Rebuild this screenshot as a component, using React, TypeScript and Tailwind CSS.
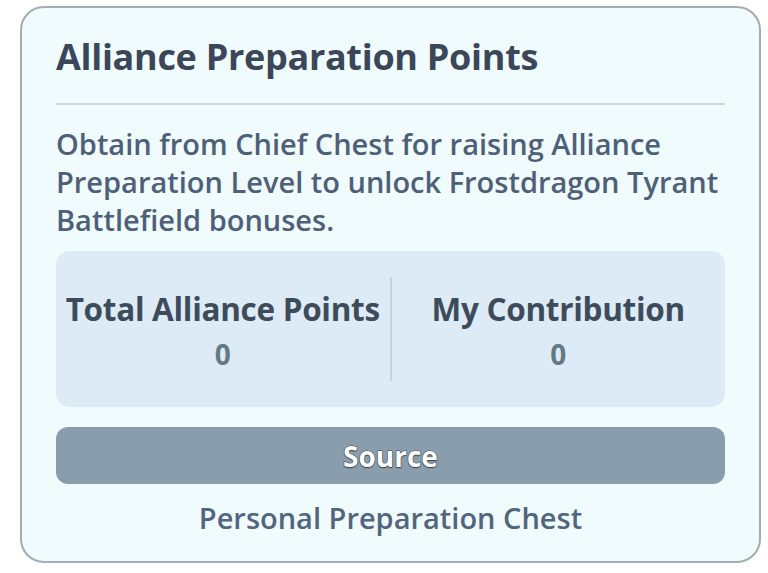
const stats = [
  { label: "Total Alliance Points", value: 0 },
  { label: "My Contribution", value: 0 },
];

export default function App() {
  return (
    <div className="w-[768px] h-[573px] bg-white flex items-start pl-[20px] pt-[6px] font-['Open_Sans',sans-serif]">
      <div className="w-[741px] h-[557px] rounded-[24px] border-2 border-[#a3acb2] bg-[#f0fbfd] px-[34px] pt-[27px] flex flex-col">
        <h1 className="text-[36px] leading-[44px] font-bold text-[#3b4759] tracking-[-0.3px]">
          Alliance Preparation Points
        </h1>
        <div className="mt-[24px] h-[2px] bg-[#ccd6db]" />

        <p className="mt-[20px] text-[29px] leading-[38px] font-semibold text-[#4e6079]">
          Obtain from Chief Chest for raising Alliance Preparation Level to unlock Frostdragon Tyrant Battlefield bonuses.
        </p>

        <div className="mt-[12px] h-[156px] rounded-[14px] bg-[#dcebf6] flex items-center">
          {stats.map((s, i) => (
            <div
              key={s.label}
              className={
                i === 0
                  ? "flex-1 h-[104px] pt-[2px] flex flex-col items-center justify-center border-r-2 border-[#c4d3dd]"
                  : "flex-1 h-[104px] pt-[2px] flex flex-col items-center justify-center"
              }
            >
              <div className="text-[31.5px] leading-[40px] font-bold text-[#3e4b5b] tracking-[-0.3px]">{s.label}</div>
              <div className="mt-[7px] text-[28px] leading-[36px] font-bold text-[#647984]">{s.value}</div>
            </div>
          ))}
        </div>

        <button className="mt-[20px] h-[57px] rounded-[12px] bg-[#8a9dac] flex items-center justify-center">
          <span className="text-[28px] font-bold text-white [-webkit-text-stroke:1px_#3d4650] [paint-order:stroke_fill] [text-shadow:0_1px_1px_#3d4650]">
            Source
          </span>
        </button>

        <div className="mt-[16px] text-center text-[29px] leading-[36px] font-semibold text-[#52657f]">
          Personal Preparation Chest
        </div>
      </div>
    </div>
  );
}
